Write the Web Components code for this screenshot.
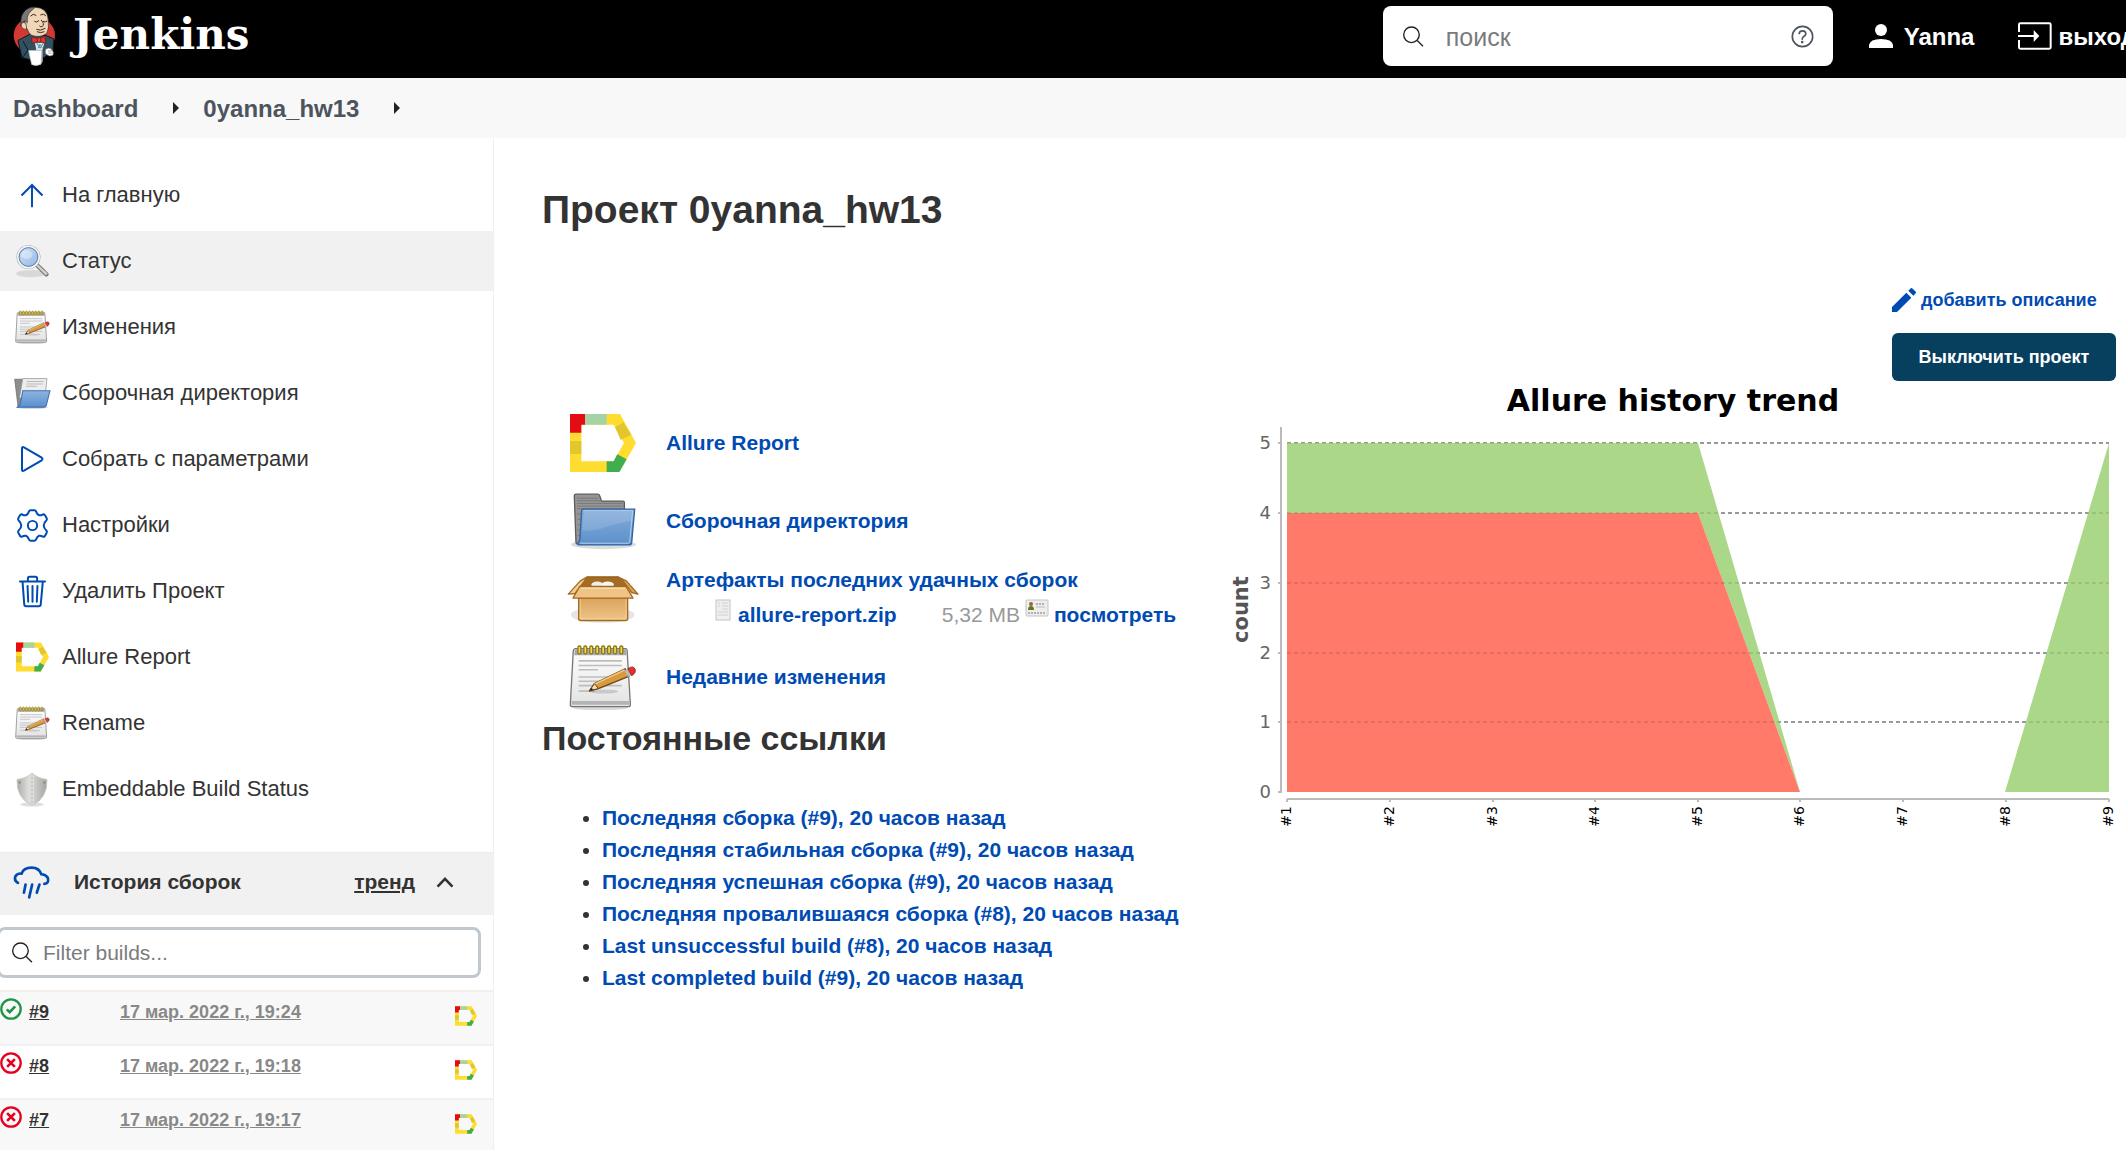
<!DOCTYPE html>
<html lang="ru">
<head>
<meta charset="utf-8">
<title>0yanna_hw13 [Jenkins]</title>
<style>
  html, body { margin: 0; min-height: 100%; }
  body {
    font-family: "Liberation Sans", Arial, sans-serif;
    font-size: 21px; line-height: 32px; color: #333; background: #fff;
    overflow-x: hidden;
    --link: #004bb3;
  }
</style>
</head>
<body>
<jk-app>
  <jk-header slot="header" user="Yanna"></jk-header>
  <jk-breadcrumbs slot="crumbs">
    <jk-crumb>Dashboard</jk-crumb>
    <jk-crumb>0yanna_hw13</jk-crumb>
  </jk-breadcrumbs>
  <jk-tasks slot="side">
    <jk-task icon="up">На главную</jk-task>
    <jk-task icon="search" active>Статус</jk-task>
    <jk-task icon="notepadSmall">Изменения</jk-task>
    <jk-task icon="folderOpen">Сборочная директория</jk-task>
    <jk-task icon="play">Собрать с параметрами</jk-task>
    <jk-task icon="gear">Настройки</jk-task>
    <jk-task icon="trash">Удалить Проект</jk-task>
    <jk-task icon="allureMedium">Allure Report</jk-task>
    <jk-task icon="notepadSmall">Rename</jk-task>
    <jk-task icon="shield">Embeddable Build Status</jk-task>
  </jk-tasks>
  <jk-history slot="side">
    <jk-build number="#9" status="ok">17 мар. 2022 г., 19:24</jk-build>
    <jk-build number="#8" status="failed">17 мар. 2022 г., 19:18</jk-build>
    <jk-build number="#7" status="failed">17 мар. 2022 г., 19:17</jk-build>
  </jk-history>
  <jk-project name="Проект 0yanna_hw13">
    <jk-summary icon="allure">Allure Report</jk-summary>
    <jk-summary icon="folder">Сборочная директория</jk-summary>
    <jk-summary icon="package">Артефакты последних удачных сборок
      <jk-artifact slot="extra" file="allure-report.zip" size="5,32 MB" view="посмотреть"></jk-artifact>
    </jk-summary>
    <jk-summary icon="notepad">Недавние изменения</jk-summary>
    <jk-permalinks slot="links" heading="Постоянные ссылки">
      <jk-permalink>Последняя сборка (#9), 20 часов назад</jk-permalink>
      <jk-permalink>Последняя стабильная сборка (#9), 20 часов назад</jk-permalink>
      <jk-permalink>Последняя успешная сборка (#9), 20 часов назад</jk-permalink>
      <jk-permalink>Последняя провалившаяся сборка (#8), 20 часов назад</jk-permalink>
      <jk-permalink>Last unsuccessful build (#8), 20 часов назад</jk-permalink>
      <jk-permalink>Last completed build (#9), 20 часов назад</jk-permalink>
    </jk-permalinks>
    <jk-trend slot="chart"></jk-trend>
  </jk-project>
</jk-app>

<script>
/* ---------- icons: [viewBox, width, height, markup] ---------- */
const ALLURE = `
  <path fill="#fedc30" fill-rule="evenodd" d="M32 42H182L230 129 180 216H32ZM66 74V184H163L194 129 163 74Z"/>
  <path fill="#e30d13" d="M32 42H77V74H66V98H32Z"/><path fill="#a6d3a5" d="M77 42H142V74H77Z"/>
  <path fill="#e2c62e" d="M32 123H66V162H32ZM167 82 192 67 216 104 184 119Z"/>
  <path fill="#40ad4e" d="M142 184H163L174 163 202 178 180 216H142Z"/>`;
const NOTEPAD = `
  <defs><linearGradient id="p" x2="0" y2="1"><stop stop-color="#fff"/><stop offset="1" stop-color="#e2e2e2"/></linearGradient></defs>
  <ellipse cx="130" cy="921" rx="84" ry="8" fill="#000" opacity=".15"/>
  <path d="M54 742H206Q211 742 211 748L221 910Q222 918 214 918H46Q38 918 39 910L48 748Q49 742 54 742Z" fill="url(#p)" stroke="#777" stroke-width="4"/>
  <path d="M52 744H209V762H51Z" fill="#a8a8a8"/><path d="M43 901H218V912H43Z" fill="#b4b4b4"/>
  <path d="M64 779H195M64 793H195M64 806H123M64 828H195M64 841H160M64 854H150M150 854H195M64 871H112" stroke="#bdbdbd" stroke-width="5"/>
  <g fill="#f0dc50" stroke="#8d7714" stroke-width="4">${[66,84,102,120,138,156,174,193].map(x=>`<rect x="${x-4}" y="734" width="9" height="24" rx="4"/>`).join('')}</g>
  <ellipse cx="140" cy="872" rx="44" ry="6" fill="#000" opacity=".14"/>
  <path d="M97 870 112 848 205 803 216 826 124 863Z" fill="#d99a3e" stroke="#6b431a" stroke-width="4" stroke-linejoin="round"/>
  <path d="M112 850 203 807" stroke="#f0c57c" stroke-width="5"/>
  <path d="M97 870 112 848 124 863Z" fill="#f4dfb0" stroke="#6b431a" stroke-width="3"/><path d="M97 870 103 861 109 866Z" fill="#222"/>
  <path d="M203 808 214 802 226 823 214 828Z" fill="#bbb"/>
  <path d="M213 803Q231 791 236 806 238 817 225 824Z" fill="#ef2b2b" stroke="#8b3a28" stroke-width="3"/>`;
const ICONS = {
  jenkins: ['38 16 132 182', 44, 61, `
    <ellipse cx="105" cy="104" rx="62" ry="56" fill="#d33833"/>
    <path d="M56 119 92 100 140 104 163 114 161 150 134 170 92 176 68 170Z" fill="#335061" stroke="#0b1a22" stroke-width="3"/>
    <path d="M77 54Q72 22 106 19 146 20 147 60 150 84 142 98 122 112 98 104 88 100 83 83 70 84 65 74 66 62 77 64Z" fill="#f0d6b7" stroke="#2a1d16" stroke-width="2"/>
    <path d="M108 19Q84 18 73 35 63 48 65 68L76 60 84 66Q82 46 89 37 96 29 108 19Z" fill="#777" stroke="#333" stroke-width="2"/>
    <path d="M66 68Q72 62 79 67 83 77 81 86 69 86 66 76Z" fill="#f0d6b7" stroke="#2a1d16" stroke-width="2"/>
    <path d="M94 45Q101 36 110 43M124 42Q133 36 139 44M106 62Q112 67 118 60M132 62Q138 66 143 61M126 58Q137 70 129 77 124 80 121 76M112 86Q122 92 137 83M114 93Q124 98 134 93" fill="none" stroke="#3b2a20" stroke-width="3" stroke-linecap="round"/>
    <path d="M105 124 137 124 130 150H110Z" fill="#d8e5ec" stroke="#234" stroke-width="2"/>
    <path d="M112 126 122 142 133 126M117 142 122 130 129 142" fill="none" stroke="#5a92ad" stroke-width="3"/>
    <path d="M97 108 116 114 138 107 139 128 121 122 98 127Z" fill="#d33833" stroke="#6d1412" stroke-width="2"/><rect x="114" y="111" width="10" height="13" rx="3" fill="#e8413b" stroke="#6d1412" stroke-width="2"/>
    <path d="M71 121 86 148 70 170M85 149H106" fill="none" stroke="#0b1a22" stroke-width="3"/>
    <path d="M125 149 131 146V182L124 190Z" fill="#888"/>
    <path d="M88 149H127L125 190Q110 197 97 191Z" fill="#fff" stroke="#ccc" stroke-width="2"/>
    <path d="M138 146Q148 138 157 145 165 154 161 163 150 169 143 162 136 160 138 146Z" fill="#fff" stroke="#555" stroke-width="2"/><path d="M146 151 158 150M147 157 157 157" stroke="#777" stroke-width="2"/>`],
  magnifier: ['36 308 62 62', 21, 21, `<circle cx="61" cy="334" r="23" fill="none" stroke="#222" stroke-width="4"/><path d="M78 351 95 368" stroke="#222" stroke-width="4"/>`],
  help: ['34 73 70 70', 23, 23, `<circle cx="69" cy="108" r="31" fill="none" stroke="#4d545d" stroke-width="5"/><path d="M59 99Q60 91 69 91 79 91 79 100 79 105 73 108 68 111 68 116" fill="none" stroke="#4d545d" stroke-width="5" stroke-linecap="round"/><circle cx="68" cy="125" r="4" fill="#4d545d"/>`],
  user: ['267 72 72 72', 24, 24, `<circle cx="303" cy="90" r="18" fill="#fff"/><path d="M267 144V135Q270 117 303 117 336 117 339 135V144Z" fill="#fff"/>`],
  logout: ['714 66 102 84', 34, 28, `<path d="M717 96V74Q717 70 721 70H808Q812 70 812 74V142Q812 146 808 146H721Q717 146 717 142V120" fill="none" stroke="#fff" stroke-width="6"/><path d="M714 108H768" stroke="#fff" stroke-width="6"/><path d="M761 90 778 108 761 126Z" fill="#fff"/>`],
  pencil: ['336 864 72 72', 24, 24, `<path fill="#004bb3" d="M336 921 379 878 394 893 351 936H336ZM385 872 391 866Q394 862 398 866L406 874Q410 878 406 881L400 887Z"/>`],
  up: ['60 546 72 76', 24, 25, `<path d="M96 620V552M64 584 96 552 128 584" fill="none" stroke="#004bb3" stroke-width="6"/>`],
  search: ['44 730 104 102', 35, 34, `
    <defs><linearGradient id="g" x2="1" y2="1"><stop stop-color="#d5e6f8"/><stop offset="1" stop-color="#8fb3e0"/></linearGradient></defs>
    <ellipse cx="92" cy="819" rx="45" ry="11" fill="#000" opacity=".1"/>
    <path d="M108 792 138 821" stroke="#777" stroke-width="13" stroke-linecap="round"/><path d="M108 791 137 819" stroke="#d0d0d0" stroke-width="8" stroke-linecap="round"/><path d="M112 790 134 811" stroke="#888" stroke-width="3"/>
    <circle cx="84" cy="769" r="32" fill="url(#g)" stroke="#a4a7aa" stroke-width="8"/><circle cx="84" cy="769" r="32" fill="none" stroke="#f6f6f6" stroke-width="5"/><circle cx="84" cy="769" r="28" fill="none" stroke="#5a86c4" stroke-width="3"/>
    <ellipse cx="79" cy="762" rx="17" ry="13" fill="#fff" opacity=".35"/>`],
  play: ['60 465 72 84', 24, 28, `<path d="M66 475Q66 469 72 472L125 503Q130 507 125 511L72 542Q66 545 66 539Z" fill="none" stroke="#004bb3" stroke-width="6"/>`],
  trash: ['53 43 86 100', 29, 33, `<g fill="none" stroke="#004bb3" stroke-width="6" stroke-linecap="round"><path d="M58 63H134M66 66 71 132Q71 138 77 138H115Q121 138 121 132L127 66M82 62V53Q82 48 87 48H105Q110 48 110 53V62M81 76 83 124M96 76V124M111 76 109 124"/></g>`],
  gear: ['46 653 100 104', 33, 35, `<g fill="none" stroke="#004bb3" stroke-width="6" stroke-linejoin="round"><circle cx="96" cy="705" r="14"/><path d="M90 659H102Q106 659 107 663 110 672 116 674 121 675 128 671 132 670 134 674L139 683Q141 687 138 690 130 697 130 705 130 713 138 720 141 723 139 727L134 736Q132 740 128 739 121 735 116 736 110 738 107 747 106 751 102 751H90Q86 751 85 747 82 738 76 736 71 735 64 739 60 740 58 736L53 727Q51 723 54 720 62 713 62 705 62 697 54 690 51 687 53 683L58 674Q60 670 64 671 71 675 76 674 82 672 85 663 86 659 90 659Z"/></g>`],
  allure: ['32 42 198 174', 66, 58, ALLURE],
  allureMedium: ['32 42 198 174', 33, 30, ALLURE],
  allureSmall: ['32 42 198 174', 22, 20, ALLURE],
  notepad: ['36 728 204 200', 68, 66, NOTEPAD],
  notepadSmall: ['36 728 204 200', 35, 34, NOTEPAD],
  folderOpen: ['42 256 110 94', 37, 32, `
    <defs><linearGradient id="f" x2="0" y2="1"><stop stop-color="#8db4e0"/><stop offset="1" stop-color="#5b90cf"/></linearGradient></defs>
    <ellipse cx="96" cy="346" rx="46" ry="4" fill="#000" opacity=".2"/>
    <path d="M44 262H66L70 268H134V336L54 344Z" fill="#8d8d8d" stroke="#666" stroke-width="2"/>
    <path d="M68 260H140L134 318H58Z" fill="#ededed" stroke="#8a8a8a" stroke-width="2"/><path d="M80 269H130M79 276H128M78 283H110" stroke="#bbb" stroke-width="3"/>
    <path d="M68 296H149L138 340Q137 345 131 345H52Q60 340 62 330Z" fill="url(#f)" stroke="#3c6fb0" stroke-width="3"/>`],
  folder: ['26 274 202 174', 67, 58, `
    <defs><linearGradient id="f" x2="0" y2="1"><stop stop-color="#86add9"/><stop offset="1" stop-color="#5b90cc"/></linearGradient></defs>
    <ellipse cx="127" cy="432" rx="98" ry="14" fill="#000" opacity=".14"/>
    <path d="M44 280H110Q115 280 116 286L121 301H186Q190 301 190 306V430H50Q44 430 44 424L39 286Q39 280 44 280Z" fill="#969696" stroke="#5c5c5c" stroke-width="4"/>
    <path d="M46 292H112M46 300H116M47 308H184M47 316H184M47 324H184M48 340H60M48 356H60M49 372H60M49 388H58M49 404H56" stroke="#787878" stroke-width="3"/>
    <path d="M65 325H221L212 426Q211 433 204 433H52Q48 433 50 427 55 420 56 414L61 330Q61 325 65 325Z" fill="url(#f)" stroke="#2f64a6" stroke-width="4"/>
    <path d="M67 330H215L206 424Q205 428 201 428H57" fill="none" stroke="#b4cfec" stroke-width="3"/><path d="M68 332H214L211 360Q150 372 120 384 90 392 62 390Z" fill="#fff" opacity=".13"/>`],
  package: ['22 526 216 146', 72, 49, `
    <defs><linearGradient id="b" x2="0" y2="1"><stop stop-color="#d9a35c"/><stop offset="1" stop-color="#efc588"/></linearGradient></defs>
    <ellipse cx="129" cy="645" rx="96" ry="24" fill="#000" opacity=".1"/>
    <path d="M82 531H176L200 550V596H60V550Z" fill="#a46c22" stroke="#8a5517" stroke-width="3"/>
    <ellipse cx="113" cy="554" rx="18" ry="9" fill="#eee"/><ellipse cx="144" cy="554" rx="19" ry="9" fill="#f6f6f6"/>
    <path d="M82 532 62 543 26 583 46 581 74 544Z" fill="#f2cf95" stroke="#a5691f" stroke-width="4" stroke-linejoin="round"/>
    <path d="M176 532 200 543 235 583 216 578 186 538Z" fill="#dba35a" stroke="#a5691f" stroke-width="4" stroke-linejoin="round"/>
    <path d="M57 594H204V656Q204 662 198 662H63Q57 662 57 656Z" fill="url(#b)" stroke="#a5691f" stroke-width="4"/><path d="M62 598V657H199V598" fill="none" stroke="#f6d9a8" stroke-width="2"/>
    <path d="M60 560H199L220 595H40Z" fill="#f0c384" stroke="#a5691f" stroke-width="4" stroke-linejoin="round"/><path d="M63 565H197" stroke="#fbe6c0" stroke-width="3"/>`],
  shield: ['48 634 96 104', 32, 35, `
    <defs><linearGradient id="s"><stop stop-color="#a9aca7"/><stop offset=".4" stop-color="#dfe0dd"/><stop offset="1" stop-color="#a3a5a1"/></linearGradient></defs>
    <ellipse cx="96" cy="731" rx="36" ry="6" fill="#000" opacity=".13"/>
    <path d="M96 637Q112 652 141 656 143 712 96 734 49 712 51 656 80 652 96 637Z" fill="url(#s)" stroke="#c9cbc8" stroke-width="3"/>
    <path d="M90 644H102V730H90Z" fill="#dcdcda"/><path d="M96 650V726" stroke="#b0b2ae" stroke-width="4" stroke-dasharray="4 8"/><circle cx="59" cy="665" r="4" fill="#8e918c"/><circle cx="133" cy="665" r="4" fill="#8e918c"/>`],
  cloud: ['40 79 112 104', 37, 35, `<g fill="none" stroke="#004bb3" stroke-width="8" stroke-linecap="round"><path d="M55 132Q43 126 47 113 52 103 66 104 72 86 96 86 119 86 126 106 138 106 145 116 150 134 135 135"/><path d="M78 137 73 162M98 137 89 176M120 137 112 162"/></g>`],
  chevron: ['1308 114 54 34', 18, 11, `<path d="M1312 144 1335 120 1358 144" fill="none" stroke="#333" stroke-width="8"/>`],
  ok: ['0 476 68 68', 22, 22, `<circle cx="34" cy="510" r="30" fill="none" stroke="#1e9447" stroke-width="7"/><path d="M21 511 30 520 47 502" fill="none" stroke="#1e9447" stroke-width="8"/>`],
  failed: ['0 476 68 68', 22, 22, `<circle cx="34" cy="510" r="30" fill="none" stroke="#e6001f" stroke-width="7"/><path d="M22 498 46 522M46 498 22 522" fill="none" stroke="#e6001f" stroke-width="8"/>`],
  doc: ['0 0 20 22', 20, 22, `<rect x="3" y="1" width="14" height="20" fill="#efefef" stroke="#c4c4c4"/><path d="M5 4H7M5 7H7M9 4H15M9 7H15M9 10H15M5 13H15M5 16H15" stroke="#d0d0d0"/>`],
  card: ['0 0 24 18', 24, 18, `<rect x="1" y="1" width="22" height="16" rx="1" fill="#eee" stroke="#c4c4c4"/><circle cx="6" cy="5" r="2" fill="#a0642c"/><path d="M3 11Q3 7 6 7 9 7 9 11Z" fill="#5c7a1f"/><path d="M11 5H20M3 14H21" stroke="#777" stroke-dasharray="2 1"/><path d="M11 8H20" stroke="#bbb"/>`]
};

/* ---------- base: fills an open shadow root from css and markup ---------- */
function define(tag, css, markup) {
  customElements.define(tag, class extends HTMLElement {
    connectedCallback() {
      if (this.shadowRoot) return;
      const t = document.createElement('template');
      t.innerHTML = `<style>:host{display:block}*{box-sizing:border-box}a{color:var(--link);text-decoration:none;font-weight:bold}${css}</style>${markup(n => this.getAttribute(n) || '')}`;
      this.attachShadow({ mode: 'open' }).append(t.content.cloneNode(true));
    }
  });
}

define('jk-icon', `:host{display:inline-flex;flex:none}svg{display:block}`, a => {
  const [vb, w, h, body] = ICONS[a('name')];
  return `<svg viewBox="${vb}" width="${w}" height="${h}" aria-hidden="true">${body}</svg>`;
});

define('jk-app', `
  .body{display:flex;align-items:stretch}
  .side{flex:none;width:494px;border-right:1px solid #f0f0f0}
  main{flex:1;min-width:0}`,
  () => `<slot name="header"></slot><slot name="crumbs"></slot>
  <div class="body"><div class="side"><slot name="side"></slot></div><main><slot></slot></main></div>`);

define('jk-header', `
  header{display:flex;align-items:center;height:78px;background:#000;color:#fff;padding:0 0 6px 12px;font-size:24px;overflow:hidden}
  a{color:#fff;display:flex;align-items:center;flex:none}
  .logo{gap:17px;font:bold 42px/60px "DejaVu Serif",serif;margin-right:auto}
  .logo span{padding-bottom:2px}
  label{display:flex;align-items:center;width:450px;height:60px;background:#fff;border-radius:8px;padding:0 19px 0 20px;gap:22px}
  input{flex:1;min-width:0;border:0;outline:0;background:none;font:inherit;font-size:25px;padding:2px 0 0;color:#333}
  input::placeholder{color:#7b7b7b;opacity:1}
  button{border:0;background:none;padding:0;display:flex}
  .user{margin:0 44px 0 36px;gap:11px}
  .out{gap:6px;margin-right:-10px}
  .user span,.out span{padding-top:2px}`,
  a => `<header>
    <a class="logo" href="#"><jk-icon name="jenkins"></jk-icon><span>Jenkins</span></a>
    <label><jk-icon name="magnifier"></jk-icon><input type="text" placeholder="поиск" aria-label="поиск"><button type="button" aria-label="Справка"><jk-icon name="help"></jk-icon></button></label>
    <a class="user" href="#"><jk-icon name="user"></jk-icon><span>${a('user')}</span></a>
    <a class="out" href="#"><jk-icon name="logout"></jk-icon><span>выход</span></a>
  </header>`);

define('jk-breadcrumbs', `nav{display:flex;align-items:center;height:60px;background:#f8f8f8;padding-left:13px;gap:24px}`,
  () => `<nav><slot></slot></nav>`);
define('jk-crumb', `
  :host{display:flex;align-items:center;gap:35px}
  a{color:#4d545d;font-size:24px;padding-top:2px}
  i{border:6px solid transparent;border-left-color:#222;border-right:0}`,
  () => `<a href="#"><slot></slot></a><i></i>`);

define('jk-tasks', `nav{display:flex;flex-direction:column;gap:6px;padding:27px 0 33px}`, () => `<nav><slot></slot></nav>`);
define('jk-task', `
  a{display:flex;align-items:center;gap:12px;height:60px;padding-left:14px;color:#333;font-weight:500;font-size:22px}
  :host([active]) a{background:#f1f1f1}
  span{display:flex;justify-content:center;width:36px}`,
  a => `<a href="#"><span><jk-icon name="${a('icon')}"></jk-icon></span><slot></slot></a>`);

define('jk-history', `
  header{display:flex;align-items:center;height:63px;background:#f1f1f1;border-top:1px solid #ececec;padding:0 39px 4px 13px;font-weight:bold}
  .t{margin:0 auto 0 24px}
  a{color:#333;text-decoration:underline;margin-right:21px}
  button{border:0;background:none;padding:0;display:flex}
  label{display:flex;align-items:center;gap:10px;height:51px;margin:12px 12px 12px -3px;border:3px solid #c0c8ce;border-radius:8px;padding-left:12px}
  input{flex:1;border:0;outline:0;background:none;font:inherit;padding:0}
  input::placeholder{color:#7b7b7b;opacity:1}`,
  () => `<header><jk-icon name="cloud"></jk-icon><span class="t">История сборок</span><a href="#">тренд</a><button type="button" aria-label="Свернуть"><jk-icon name="chevron"></jk-icon></button></header>
  <label><jk-icon name="magnifier"></jk-icon><input type="text" placeholder="Filter builds..." aria-label="Filter builds"></label><slot></slot>`);
define('jk-build', `
  .row{display:flex;align-items:flex-start;height:54px;border-top:2px solid #f0f0f0;font-size:18px;line-height:26px;padding:6px 16px 0 0}
  :host(:nth-child(odd)) .row{background:#f8f8f8}
  a{text-decoration:underline}
  .n{width:91px;margin-left:7px;padding-top:1px}
  .n a{color:#333}
  .d{color:#888;margin-right:auto;padding-top:1px}
  .r{padding-top:8px}`,
  a => `<div class="row"><jk-icon name="${a('status')}"></jk-icon><span class="n"><a href="#">${a('number')}</a></span><a class="d" href="#"><slot></slot></a><a class="r" href="#" aria-label="Allure"><jk-icon name="allureSmall"></jk-icon></a></div>`);

define('jk-project', `
  :host{padding:48px 10px 0 48px}
  h1{margin:0;font-size:39px;line-height:48px}
  .cols{display:flex;align-items:flex-start;margin-top:50px}
  .l{flex:1;min-width:0;padding-top:120px}
  .r{flex:none;display:flex;flex-direction:column}
  .act{align-self:flex-end;display:flex;flex-direction:column;gap:17px;font-size:18px}
  .act a{display:flex;align-items:center;gap:5px}
  .act button{width:224px;height:48px;border:0;border-radius:6px;background:#073f5f;color:#fff;font:bold 18px "Liberation Sans",Arial,sans-serif}`,
  a => `<h1>${a('name')}</h1><div class="cols"><div class="l"><slot></slot><slot name="links"></slot></div>
  <div class="r"><div class="act"><a href="#"><jk-icon name="pencil"></jk-icon>добавить описание</a><button type="button">Выключить проект</button></div><slot name="chart"></slot></div></div>`);

define('jk-summary', `
  .row{display:flex;align-items:center;height:78px;padding-left:25px;gap:27px}
  .i{display:flex;justify-content:center;width:72px}
  .b{display:flex;flex-direction:column;gap:3px}`,
  a => `<div class="row"><span class="i"><jk-icon name="${a('icon')}"></jk-icon></span><div class="b"><a href="#"><slot></slot></a><slot name="extra"></slot></div></div>`);
define('jk-artifact', `
  .row{display:flex;align-items:flex-start;padding:0 0 4px 47px}
  .f{margin:0 45px 0 5px}
  .s{color:#999;margin-right:5px}
  .v{margin-left:5px}`,
  a => `<div class="row"><jk-icon name="doc"></jk-icon><a class="f" href="#">${a('file')}</a><span class="s">${a('size')}</span><jk-icon name="card"></jk-icon><a class="v" href="#">${a('view')}</a></div>`);

define('jk-permalinks', `h2{margin:0 0 42px;font-size:34px;line-height:44px}ul{margin:0;padding:0 0 0 60px}`,
  a => `<h2>${a('heading')}</h2><ul><slot></slot></ul>`);
define('jk-permalink', `:host{display:list-item;list-style:disc}`, () => `<a href="#"><slot></slot></a>`);

const X = [1287, 1390, 1493, 1595, 1698, 1800, 1903, 2006, 2109];
const Y = [792, 722, 653, 583, 513, 443];
const GRID = Y.slice(1).map(y => `<path d="M1287 ${y}H2109"/>`).join('');
define('jk-trend', `svg{display:block}text{font-family:"DejaVu Sans",sans-serif}`,
  () => `<svg viewBox="1226 381 890 450" width="890" height="450" role="img" aria-label="Allure history trend">
  <text x="1673" y="411" text-anchor="middle" font-size="30" font-weight="bold" fill="#000">Allure history trend</text>
  <g stroke="#aaa" stroke-width="2" stroke-dasharray="4 3">${GRID}</g>
  <path d="M1287 443H1698L1800 792 1698 513H1287ZM2005 792 2109 443V792Z" fill="#abd789"/>
  <path d="M1287 513H1698L1800 792H1287Z" fill="#ff7a68"/>
  <g stroke="#000" stroke-opacity=".1" stroke-width="2" stroke-dasharray="4 3">${GRID}</g>
  <path d="M1281 427V793M1287 799H2109${Y.map(y => `M1278 ${y}H1281`).join('')}${X.map(x => `M${x} 799V802`).join('')}" stroke="#bbb" stroke-width="2" fill="none"/>
  <g font-size="18" fill="#666" text-anchor="end">${Y.map((y, i) => `<text x="1271" y="${y + 6}">${i}</text>`).join('')}</g>
  <text transform="translate(1248 643) rotate(-90)" font-size="21" font-weight="bold" fill="#555">count</text>
  <g font-size="14" fill="#000" text-anchor="end">${X.map((x, i) => `<text transform="translate(${x + 4} 806) rotate(-90)">#${i + 1}</text>`).join('')}</g>
  </svg>`);
</script>
</body>
</html>
